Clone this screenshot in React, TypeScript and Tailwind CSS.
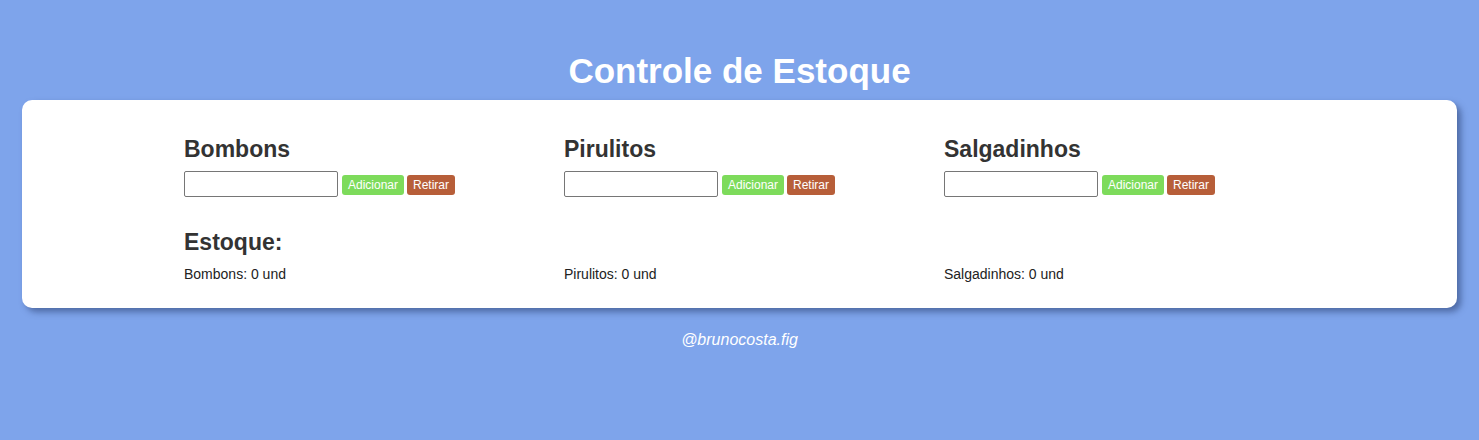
import { useState } from "react";

type Item = { nome: string; qtd: number };

const itensIniciais: Item[] = [
  { nome: "Bombons", qtd: 0 },
  { nome: "Pirulitos", qtd: 0 },
  { nome: "Salgadinhos", qtd: 0 },
];

export default function App() {
  const [itens, setItens] = useState<Item[]>(itensIniciais);
  const [valores, setValores] = useState<string[]>(["", "", ""]);

  function alterar(i: number, sinal: number) {
    const n = parseInt(valores[i], 10);
    if (isNaN(n)) return;
    setItens((prev) => prev.map((it, idx) => (idx === i ? { ...it, qtd: Math.max(0, it.qtd + sinal * n) } : it)));
  }

  return (
    <div className="min-h-[440px] bg-[#7ea4eb] pt-[51px] font-['Liberation_Sans',Arial,sans-serif]">
      <h1 className="text-center text-[35px] leading-[40px] font-bold text-white">Controle de Estoque</h1>

      <div className="mx-[22px] mt-[9px] h-[208px] rounded-[10px] bg-white pl-[162px] pt-[36px] shadow-[4px_4px_6px_rgba(40,60,110,0.55)]">
        <div className="grid grid-cols-[380px_380px_380px]">
          {itens.map((it, i) => (
            <div key={it.nome}>
              <h2 className="text-[23px] leading-[27px] font-bold text-[#333]">{it.nome}</h2>
              <div className="mt-[8px] flex items-start">
                <input
                  type="text"
                  value={valores[i]}
                  onChange={(e) => setValores((v) => v.map((x, idx) => (idx === i ? e.target.value : x)))}
                  className="h-[26px] w-[154px] rounded-[2px] border border-[#767676] bg-white px-1 text-[13px]"
                />
                <button
                  type="button"
                  onClick={() => alterar(i, 1)}
                  className="mt-[4px] ml-[4px] h-[20px] rounded-[3px] bg-[#7ddb5b] px-[6px] text-[12px] leading-[20px] text-white"
                >
                  Adicionar
                </button>
                <button
                  type="button"
                  onClick={() => alterar(i, -1)}
                  className="mt-[4px] ml-[3px] h-[20px] rounded-[3px] bg-[#b75e39] px-[6px] text-[12px] leading-[20px] text-white"
                >
                  Retirar
                </button>
              </div>
            </div>
          ))}

          <h3 className="col-span-3 mt-[32px] text-[23px] leading-[26px] font-bold text-[#333]">Estoque:</h3>

          {itens.map((it) => (
            <p key={it.nome} className="mt-[11px] text-[14px] leading-[17px] text-[#222]">
              {it.nome}: {it.qtd} und
            </p>
          ))}
        </div>
      </div>

      <p className="mt-[20px] text-center text-[16px] italic text-white">@brunocosta.fig</p>
    </div>
  );
}
